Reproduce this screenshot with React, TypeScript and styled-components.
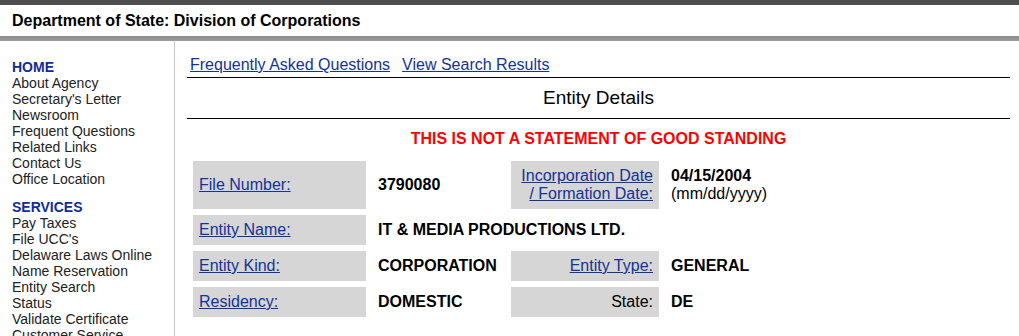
import React from "react";
import styled, { createGlobalStyle } from "styled-components";

const Global = createGlobalStyle`
  html, body { margin: 0; padding: 0; background: #fff; overflow: hidden; }
  body { font-family: "Liberation Sans", Arial, Helvetica, sans-serif; color: #000; }
`;

const Page = styled.div`
  width: 1019px;
  display: flex;
  flex-direction: column;
`;

const TopStrip = styled.div`
  height: 5px;
  background: #4e4e4e;
`;

const Header = styled.header`
  height: 31px;
  display: flex;
  align-items: center;
  padding-left: 12px;
  font-size: 16px;
  font-weight: bold;
  color: #000;
`;

const GrayBar = styled.div`
  height: 5px;
  background: linear-gradient(#8a8a8a, #9e9e9e);
`;

const Body = styled.div`
  display: flex;
  align-items: stretch;
  min-height: 300px;
`;

const Nav = styled.nav`
  width: 162px;
  flex: none;
  padding: 18px 0 0 12px;
  border-right: 1px solid #c8c8c8;
  display: flex;
  flex-direction: column;
  gap: 12px;
`;

const NavSection = styled.div`
  display: flex;
  flex-direction: column;
  font-size: 14px;
  line-height: 16px;
`;

const NavHead = styled.a`
  font-weight: bold;
  color: #0f2c9a;
  text-decoration: none;
`;

const NavLink = styled.a`
  color: #222;
  text-decoration: none;
  white-space: nowrap;
`;

const Content = styled.main`
  flex: 1;
  padding: 15px 9px 0 12px;
  display: flex;
  flex-direction: column;
`;

const TopLinks = styled.div`
  display: flex;
  gap: 12px;
  padding: 0 0 3px 3px;
  font-size: 16px;
  line-height: 18px;
  border-bottom: 1px solid #000;
`;

const Link = styled.a`
  color: #13329a;
  text-decoration: underline;
`;

const Title = styled.h1`
  margin: 0;
  height: 40px;
  display: flex;
  align-items: center;
  justify-content: center;
  font-size: 19px;
  font-weight: normal;
  border-bottom: 1px solid #000;
`;

const Warning = styled.div`
  height: 32px;
  padding-top: 4px;
  display: flex;
  align-items: center;
  justify-content: center;
  color: #f00;
  font-weight: bold;
  font-size: 16px;
`;

const Grid = styled.div`
  display: grid;
  grid-template-columns: 173px 133px 148px 1fr;
  grid-template-rows: 48px;
  grid-auto-rows: 30px;
  gap: 6px;
  padding: 6px;
  font-size: 16px;
  line-height: 18px;
`;

const LabelCell = styled.div<{ $right?: boolean }>`
  background: #d6d6d6;
  display: flex;
  flex-direction: column;
  justify-content: center;
  align-items: ${(p) => (p.$right ? "flex-end" : "flex-start")};
  text-align: ${(p) => (p.$right ? "right" : "left")};
  padding: 0 6px;
`;

const ValueCell = styled.div<{ $span?: number }>`
  display: flex;
  flex-direction: column;
  justify-content: center;
  padding: 0 6px;
  ${(p) => (p.$span ? `grid-column: span ${p.$span};` : "")}
`;

const Strong = styled.span`
  font-weight: bold;
`;

const homeLinks = [
  "About Agency",
  "Secretary's Letter",
  "Newsroom",
  "Frequent Questions",
  "Related Links",
  "Contact Us",
  "Office Location",
];

const serviceLinks = [
  "Pay Taxes",
  "File UCC's",
  "Delaware Laws Online",
  "Name Reservation",
  "Entity Search",
  "Status",
  "Validate Certificate",
  "Customer Service",
];

export default function App() {
  return (
    <Page>
      <Global />
      <TopStrip />
      <Header>Department of State: Division of Corporations</Header>
      <GrayBar />
      <Body>
        <Nav>
          <NavSection>
            <NavHead href="#">HOME</NavHead>
            {homeLinks.map((l) => (
              <NavLink key={l} href="#">{l}</NavLink>
            ))}
          </NavSection>
          <NavSection>
            <NavHead href="#">SERVICES</NavHead>
            {serviceLinks.map((l) => (
              <NavLink key={l} href="#">{l}</NavLink>
            ))}
          </NavSection>
        </Nav>
        <Content>
          <TopLinks>
            <Link href="#">Frequently Asked Questions</Link>
            <Link href="#">View Search Results</Link>
          </TopLinks>
          <Title>Entity Details</Title>
          <Warning>THIS IS NOT A STATEMENT OF GOOD STANDING</Warning>
          <Grid>
            <LabelCell><Link href="#">File Number:</Link></LabelCell>
            <ValueCell><Strong>3790080</Strong></ValueCell>
            <LabelCell $right>
              <Link href="#">Incorporation Date<br />/ Formation Date:</Link>
            </LabelCell>
            <ValueCell>
              <Strong>04/15/2004</Strong>
              <span>(mm/dd/yyyy)</span>
            </ValueCell>
            <LabelCell><Link href="#">Entity Name:</Link></LabelCell>
            <ValueCell $span={3}><Strong>IT &amp; MEDIA PRODUCTIONS LTD.</Strong></ValueCell>
            <LabelCell><Link href="#">Entity Kind:</Link></LabelCell>
            <ValueCell><Strong>CORPORATION</Strong></ValueCell>
            <LabelCell $right><Link href="#">Entity Type:</Link></LabelCell>
            <ValueCell><Strong>GENERAL</Strong></ValueCell>
            <LabelCell><Link href="#">Residency:</Link></LabelCell>
            <ValueCell><Strong>DOMESTIC</Strong></ValueCell>
            <LabelCell $right>State:</LabelCell>
            <ValueCell><Strong>DE</Strong></ValueCell>
          </Grid>
        </Content>
      </Body>
    </Page>
  );
}
